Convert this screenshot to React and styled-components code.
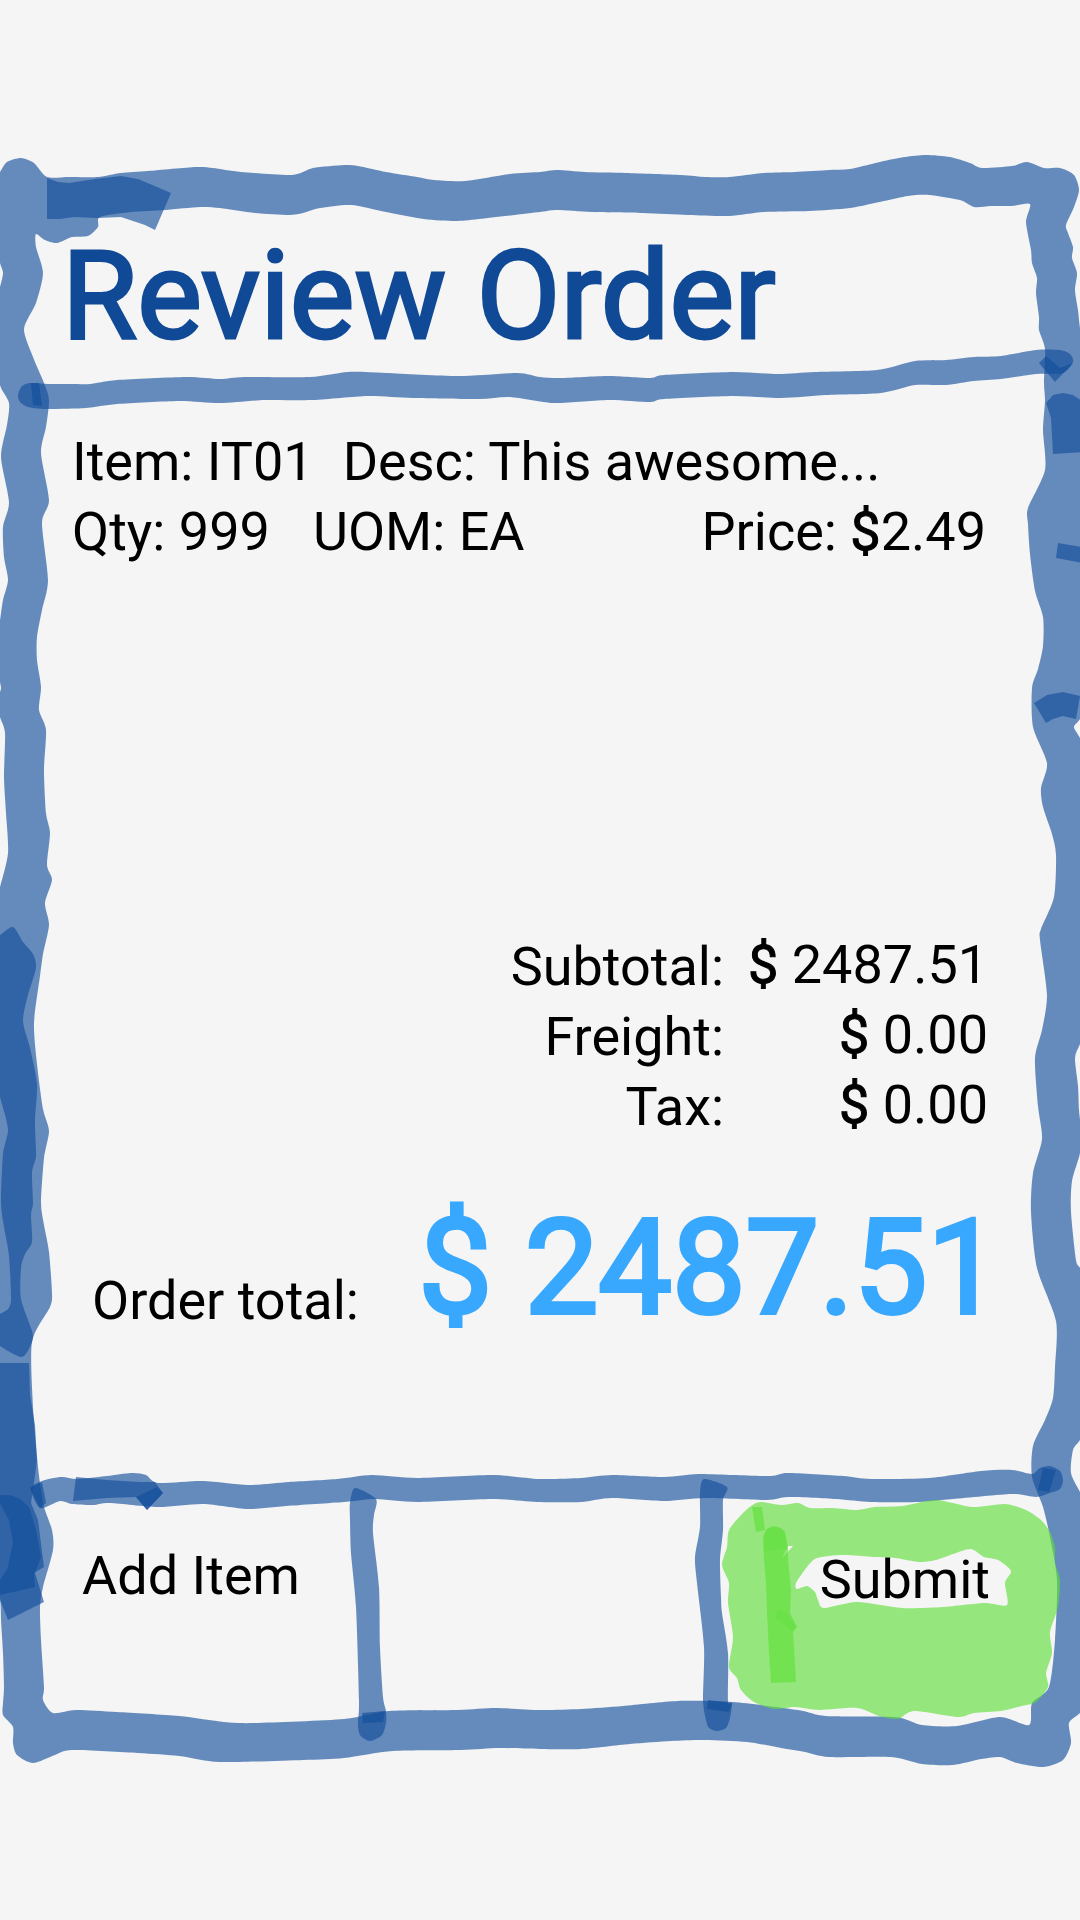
import React from "react";
import styled, { createGlobalStyle } from "styled-components";

const ink = "#104a97";
const marker = "#114d9b";
const leaf = "#5ddf38";

const GlobalStyle = createGlobalStyle`
  *, *::before, *::after { box-sizing: border-box; }
  body { margin: 0; background: #f5f5f5; }
`;

/* ---------- hand-drawn artwork ---------- */

const parse = (text) => text.trim().split(/\s+/).map((p) => p.split(",").map(Number));

const straight = (text) => `M${parse(text).join("L")}Z`;

// Closed curve passing through every point of the list.
const smooth = (text) => {
  const p = parse(text);
  const n = p.length;
  let d = `M${p[0]}`;
  for (let i = 0; i < n; i += 1) {
    const a = p[(i - 1 + n) % n];
    const b = p[i];
    const c = p[(i + 1) % n];
    const e = p[(i + 2) % n];
    d += `C${b[0] + (c[0] - a[0]) / 8},${b[1] + (c[1] - a[1]) / 8} ${c[0] - (e[0] - b[0]) / 8},${c[1] - (e[1] - b[1]) / 8} ${c}`;
  }
  return `${d}Z`;
};

const frameOuter = `
  -6,180 0,172 7,162 21,158 34,163 47,177 69,177 98,177 121,173 148,171 196,167 213,168 241,172
  292,175 313,168 344,165 358,166 386,172 417,177 434,180 465,181 510,174 540,172 557,170 585,172
  626,173 681,175 705,177 729,177 764,173 795,172 829,170 850,169 884,161 905,157 926,155 950,157
  970,163 982,168 1012,166 1027,162 1044,168 1060,168 1074,175 1079,190 1074,207 1066,225 1068,233
  1073,247 1072,258 1077,273 1075,290 1078,310 1080,328 1090,400 1090,700 1080,719 1074,727
  1080,738 1090,760 1090,1020 1080,1044 1075,1058 1078,1086 1079,1110 1081,1130 1080,1153 1072,1181
  1071,1212 1076,1260 1080,1268 1090,1290 1090,1420 1080,1440 1073,1450 1071,1473 1080,1492
  1090,1510 1090,1700 1080,1713 1069,1723 1071,1743 1063,1760 1043,1767 1017,1763 1000,1757
  981,1759 953,1765 922,1764 891,1757 829,1757 805,1752 781,1748 747,1742 705,1740 671,1741
  630,1744 581,1749 540,1749 499,1748 461,1750 393,1751 344,1758 303,1760 220,1762 179,1756
  138,1753 72,1750 55,1755 33,1763 17,1755 13,1743 13,1727 3,1715 3,1703 4,1687 3,1653 1,1620
  0,1597 -10,1500 -10,920 0,887 8,853 6,813 4,777 5,733 0,717 -3,700 1,688 -3,670 -4,640 0,620
  3,600 8,580 4,557 3,527 9,502 1,457 7,425 9,403 0,385 -5,350 -5,300 0,287 3,273 0,263 -6,240`;

const frameInner = `
  36,234 45,240 57,243 72,237 88,236 98,227 100,217 131,212 165,210 200,207 220,208 255,213
  289,215 303,213 320,208 351,205 386,212 424,219 455,221 479,219 540,212 557,210 592,212 643,213
  688,215 729,216 764,212 809,211 850,208 884,201 908,196 929,195 960,200 974,207 991,206
  1012,206 1030,204 1026,222 1031,250 1032,263 1037,278 1036,293 1039,317 1039,330 1045,349
  1044,383 1045,401 1043,430 1045,470 1028,508 1028,524 1030,554 1035,591 1043,617 1043,646
  1038,669 1032,688 1033,727 1047,763 1041,788 1043,807 1052,834 1056,855 1054,897 1041,929
  1040,940 1047,995 1042,1030 1035,1058 1038,1106 1042,1139 1033,1173 1031,1212 1037,1268
  1056,1321 1055,1367 1053,1398 1045,1420 1033,1446 1032,1477 1043,1507 1050,1537 1057,1580
  1055,1640 1049,1687 1032,1703 1029,1725 1000,1717 957,1726 922,1725 895,1717 826,1716 798,1710
  733,1702 678,1701 623,1706 581,1709 540,1710 496,1708 458,1710 389,1711 344,1719 255,1723
  224,1722 179,1716 117,1712 76,1710 53,1713 43,1700 44,1687 41,1640 40,1607 43,1587 53,1550
  52,1530 44,1507 40,1483 37,1457 33,1407 32,1342 50,1307 52,1293 49,1252 44,1225 41,1203
  44,1158 49,1131 43,1109 37,1064 34,1023 40,976 43,954 49,925 45,903 52,880 47,865 50,833
  46,813 44,770 46,730 39,710 41,687 37,660 37,637 42,610 48,580 42,523 49,500 41,453 46,427
  49,400 44,383 33,357 24,329 36,303 43,273 36,247`;

const headerRule = `
  18,395 22,386 31,383 49,384 72,384 90,384 117,380 186,377 220,379 244,377 310,377 348,372 386,373
  458,376 517,373 540,377 561,378 609,376 650,378 664,375 733,372 778,374 815,372 877,370 915,361
  946,360 974,357 1001,356 1036,350 1060,350 1070,354 1073,362 1063,373 1036,374 1001,379 974,381
  946,385 915,385 881,393 826,395 781,398 733,396 664,399 650,402 609,400 554,403 510,397 479,399
  413,398 368,396 313,400 265,400 220,403 179,401 117,404 86,408 45,409 28,407 20,402`;

const footerRule = `
  31,1488 45,1480 62,1477 77,1479 107,1476 131,1473 146,1475 158,1483 203,1481 248,1485 289,1482
  337,1479 372,1475 417,1478 492,1475 540,1479 581,1478 612,1475 664,1477 698,1474 733,1475
  771,1476 788,1473 843,1476 871,1479 929,1478 981,1471 1012,1470 1032,1474 1040,1468 1050,1466
  1060,1471 1063,1480 1060,1489 1050,1493 1036,1497 1012,1494 953,1499 919,1502 871,1502 836,1499
  788,1497 767,1500 705,1498 664,1501 612,1498 581,1502 540,1502 492,1499 417,1502 375,1499
  344,1502 286,1506 248,1509 203,1504 158,1507 110,1503 93,1505 72,1504 60,1501 40,1508`;

const leftDivider = `
  355,1488 376,1499 374,1515 373,1533 379,1587 380,1647 383,1697 386,1711 386,1723 382,1735
  370,1741 360,1735 358,1723 359,1700 356,1607 351,1553 350,1520 350,1503`;

const rightDivider = `
  704,1479 727,1487 723,1500 723,1530 720,1560 721,1597 722,1613 728,1653 728,1702 732,1703
  730,1718 726,1728 717,1731 709,1728 706,1720 703,1700 704,1647 697,1583 695,1557 700,1527 700,1493`;

const leftShade = `
  -4,937 0,935 13,927 23,942 33,954 36,968 28,995 23,1021 30,1048 37,1084 35,1121 36,1156 32,1172
  33,1203 31,1215 32,1242 25,1254 21,1268 21,1299 32,1331 32,1342 22,1357 0,1346 -4,1340 -4,1318
  0,1314 8,1309 11,1299 9,1256 4,1227 1,1203 3,1154 8,1129 0,1097 -4,1080`;

const patches = [
  "47,178 58,182 69,183 95,179 121,176 138,179 150,184 171,193 155,230 145,225 121,217 98,218 74,217 60,219 47,219",
  "31,383 39,383 42,406 33,405",
  "1039,363 1046,356 1060,368 1073,363 1055,382",
  "1046,403 1053,395 1063,393 1073,395 1082,401 1082,452 1053,454 1051,418",
  "1058,543 1082,547 1082,563 1056,558",
  "1034,703 1047,695 1063,692 1080,696 1076,719 1063,716 1053,719 1046,723",
  "0,1363 29,1363 30,1395 35,1425 37,1460 33,1490 31,1503 38,1520 44,1567 34,1573 35,1587 0,1595",
  "0,1495 10,1495 20,1499 29,1507 36,1530 41,1557 35,1573 44,1602 8,1620 0,1600 0,1580 7,1570 13,1543 9,1520 0,1503",
  "76,1477 107,1480 140,1482 155,1482 163,1493 147,1510 136,1497 107,1498 73,1501",
  "136,1497 157,1487 163,1493 147,1510",
  "30,1488 42,1482 46,1503 40,1508",
  "1043,1468 1056,1470 1049,1492 1038,1490",
  "362,1713 385,1711 383,1722 363,1723",
  "708,1700 732,1703 729,1712 707,1709",
];

const leafShape = `
  762,1502 781,1505 798,1503 810,1508 833,1508 857,1510 874,1507 902,1506 936,1500 972,1507
  1005,1504 1026,1510 1041,1520 1050,1532 1055,1547 1055,1563 1060,1580 1058,1607 1050,1632
  1052,1653 1046,1673 1048,1687 1036,1702 1022,1706 1001,1711 974,1713 958,1717 914,1711 898,1719
  879,1716 857,1708 819,1710 795,1707 774,1709 754,1702 741,1690 737,1678 729,1667 733,1637
  728,1603 729,1583 722,1565 727,1547 729,1530 743,1513 754,1504`;

const leafHole = `
  796,1583 807,1567 817,1558 843,1555 874,1557 895,1558 919,1562 936,1560 953,1554 971,1549
  984,1557 998,1560 1011,1571 1005,1583 1007,1605 984,1603 943,1607 902,1608 857,1602 824,1608
  818,1600 815,1592 807,1586 797,1589`;

const leafShades = [
  straight("763,1537 766,1530 770,1527 775,1526 781,1528 785,1532 788,1548 788,1560 791,1590 790,1613 797,1627 793,1632 794,1647 796,1682 771,1683 769,1653 767,1613 766,1583 764,1560"),
  straight("752,1507 762,1507 765,1530 756,1532"),
];

const Drawing = styled.svg`
  position: absolute;
  inset: 0;
  width: 100%;
  height: 100%;
  pointer-events: none;
`;

function Sketch() {
  return (
    <Drawing viewBox="0 0 1080 1920" preserveAspectRatio="none" aria-hidden="true">
      <g fill={marker} fillOpacity="0.63">
        <path fillRule="evenodd" d={smooth(frameOuter) + smooth(frameInner)} />
        <path d={smooth(headerRule)} />
        <path d={smooth(footerRule)} />
        <path d={smooth(leftDivider)} />
        <path d={smooth(rightDivider)} />
        <path d={smooth(leftShade)} />
        {patches.map((p) => (
          <path key={p} d={straight(p)} />
        ))}
      </g>
      <g fill={leaf} fillOpacity="0.63">
        <path
          fillRule="evenodd"
          d={smooth(leafShape) + smooth(leafHole) + straight("788,1546 793,1546 782,1558")}
        />
        {leafShades.map((d) => (
          <path key={d} d={d} />
        ))}
        <path fillOpacity="0.3" d={straight("764,1540 766,1529 775,1527 784,1530 788,1549 764,1551")} />
        <path fillOpacity="0.3" d={straight("778,1610 786,1613 797,1627 792,1631 776,1618")} />
      </g>
    </Drawing>
  );
}

/* ---------- page ---------- */

const Screen = styled.main`
  position: relative;
  display: flex;
  flex-direction: column;
  min-height: 100vh;
  padding: 222px 0 210px;
  overflow: hidden;
  background: #f5f5f5;
  color: #000;
  font: 400 54px/70px Roboto, "Liberation Sans", sans-serif;
`;

const Title = styled.h1`
  position: relative;
  margin: 0 0 55px;
  padding: 0 62px;
  color: ${ink};
  font-size: 122px;
  font-weight: 400;
  line-height: 150px;
  -webkit-text-stroke: 3px ${ink};
`;

const Item = styled.section`
  position: relative;
  flex: 1;
  padding: 0 94px 0 72px;
`;

const Line = styled.div`
  display: flex;
  gap: ${(p) => p.$gap}px;
  white-space: nowrap;
`;

const Push = styled.span`
  margin-left: auto;
`;

const Sign = styled.span`
  -webkit-text-stroke: 1px #000;
`;

const Totals = styled.dl`
  position: relative;
  display: grid;
  grid-template-columns: 1fr 240px;
  column-gap: 24px;
  margin: 0 0 60px;
  padding: 0 92px 0 72px;
  text-align: right;
`;

const Term = styled.dt`
  padding-top: 2px;
  height: 70px;
`;

const Amount = styled.dd`
  margin: 0;
  height: 70px;
  white-space: nowrap;
`;

const Grand = styled.div`
  position: relative;
  display: flex;
  align-items: flex-end;
  justify-content: space-between;
  margin-bottom: 164px;
  padding: 0 79px 0 92px;
  white-space: nowrap;
`;

const GrandValue = styled.strong`
  color: #38a8ff;
  font-size: 131px;
  font-weight: 400;
  line-height: 136px;
  -webkit-text-stroke: 4px #38a8ff;
`;

const Actions = styled.footer`
  position: relative;
  display: grid;
  grid-template-columns: 1fr 1fr 1fr;
  height: 210px;
`;

const Action = styled.button`
  display: flex;
  align-items: flex-start;
  padding: 41px 0 0 82px;
  border: 0;
  background: none;
  color: inherit;
  font: inherit;
  white-space: nowrap;
  cursor: pointer;
`;

const Submit = styled(Action)`
  grid-column: 3;
  justify-content: flex-end;
  padding: 45px 90px 0 0;
`;

const totals = [
  ["Subtotal:", "2487.51"],
  ["Freight:", "0.00"],
  ["Tax:", "0.00"],
];

export default function App() {
  return (
    <>
      <GlobalStyle />
      <Screen>
        <Sketch />
        <Title>Review Order</Title>
        <Item>
          <Line $gap={29}>
            <span>Item: IT01</span>
            <span>Desc: This awesome...</span>
          </Line>
          <Line $gap={43}>
            <span>Qty: 999</span>
            <span>UOM: EA</span>
            <Push>
              Price: <Sign>$</Sign>2.49
            </Push>
          </Line>
        </Item>
        <Totals>
          {totals.map(([name, value]) => (
            <React.Fragment key={name}>
              <Term>{name}</Term>
              <Amount>
                <Sign>$</Sign> {value}
              </Amount>
            </React.Fragment>
          ))}
        </Totals>
        <Grand>
          <span>Order total:</span>
          <GrandValue>$ 2487.51</GrandValue>
        </Grand>
        <Actions>
          <Action type="button">Add Item</Action>
          <Submit type="button">Submit</Submit>
        </Actions>
      </Screen>
    </>
  );
}
